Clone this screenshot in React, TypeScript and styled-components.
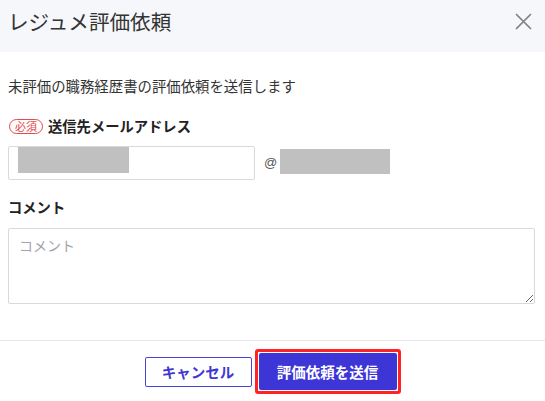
import React from "react"
import styled, { createGlobalStyle } from "styled-components"

const GlobalStyle = createGlobalStyle`
  html, body {
    margin: 0;
    padding: 0;
    background: #ffffff;
  }
  body {
    font-family: "Noto Sans CJK JP", "Noto Sans", sans-serif;
    color: #333333;
  }
  * {
    box-sizing: border-box;
  }
`

const CloseIcon = () => (
  <svg width="17" height="17" viewBox="0 0 17 17" fill="none">
    <path d="M1.5 1.5L15.5 15.5M15.5 1.5L1.5 15.5" stroke="#808080" strokeWidth="1.7" strokeLinecap="round" />
  </svg>
)

const App = () => (
  <>
    <GlobalStyle />
    <Dialog>
      <Header>
        <Title>レジュメ評価依頼</Title>
        <CloseButton aria-label="閉じる">
          <CloseIcon />
        </CloseButton>
      </Header>
      <Body>
        <Lead>未評価の職務経歴書の評価依頼を送信します</Lead>
        <LabelRow $top={20}>
          <Required>必須</Required>
          <Label>送信先メールアドレス</Label>
        </LabelRow>
        <EmailRow>
          <InputWrap>
            <TextInput type="text" />
            <Redacted $left={10} $width={111} />
          </InputWrap>
          <At>@</At>
          <DomainBlock />
        </EmailRow>
        <LabelRow $top={17}>
          <Label>コメント</Label>
        </LabelRow>
        <Comment placeholder="コメント" />
      </Body>
      <Footer>
        <CancelButton>キャンセル</CancelButton>
        <Highlight>
          <SubmitButton>評価依頼を送信</SubmitButton>
        </Highlight>
      </Footer>
    </Dialog>
  </>
)

const Dialog = styled.div`
  width: 545px;
  height: 401px;
  background: #ffffff;
  display: flex;
  flex-direction: column;
  overflow: hidden;
`

const Header = styled.div`
  height: 52px;
  flex-shrink: 0;
  background: #f6f7fb;
  display: flex;
  justify-content: space-between;
  align-items: flex-start;
  padding: 9px 13px 0 8px;
`

const Title = styled.h1`
  margin: 0;
  font-size: 20.6px;
  line-height: 24px;
  font-weight: 400;
  color: #333333;
`

const CloseButton = styled.button`
  border: none;
  background: none;
  padding: 0;
  margin-top: 4px;
  width: 17px;
  height: 17px;
  display: flex;
  cursor: pointer;
`

const Body = styled.div`
  padding: 24px 10px 36px 8px;
  border-bottom: 1px solid #e6e6ef;
  display: flex;
  flex-direction: column;
`

const Lead = styled.p`
  margin: 0;
  font-size: 14.4px;
  line-height: 20px;
  color: #333333;
`

const LabelRow = styled.div<{ $top: number }>`
  margin-top: ${(p) => p.$top}px;
  height: 20px;
  display: flex;
  align-items: center;
  gap: 5px;
`

const Required = styled.span`
  margin-left: 1px;
  width: 34px;
  height: 15px;
  border: 1px solid #e5484d;
  border-radius: 8px;
  color: #e5484d;
  font-size: 11px;
  line-height: 13px;
  display: flex;
  align-items: center;
  justify-content: center;
`

const Label = styled.span`
  font-size: 14.3px;
  line-height: 20px;
  font-weight: 700;
  color: #222222;
`

const EmailRow = styled.div`
  margin-top: 10px;
  display: flex;
  align-items: flex-start;
`

const InputWrap = styled.div`
  position: relative;
  width: 247px;
  height: 34px;
`

const TextInput = styled.input`
  width: 100%;
  height: 100%;
  border: 1px solid #d6d9df;
  border-radius: 2px;
  padding: 0 10px;
  font-size: 14px;
  font-family: inherit;
  outline: none;
`

const Redacted = styled.div<{ $left: number; $width: number }>`
  position: absolute;
  top: 1px;
  left: ${(p) => p.$left}px;
  width: ${(p) => p.$width}px;
  height: 26px;
  background: #c0c0c0;
`

const At = styled.span`
  margin: 8px 3px 0 9px;
  font-family: "Liberation Sans", Arial, sans-serif;
  font-size: 13px;
  line-height: 18px;
  color: #555555;
`

const DomainBlock = styled.div`
  margin-top: 3px;
  width: 110px;
  height: 25px;
  background: #c0c0c0;
`

const Comment = styled.textarea`
  margin-top: 11px;
  width: 100%;
  height: 76px;
  border: 1px solid #d6d9df;
  border-radius: 2px;
  padding: 6px 10px;
  font-family: inherit;
  font-size: 14px;
  line-height: 20px;
  color: #333333;
  outline: none;
  resize: vertical;

  &::placeholder {
    color: #a3a3ad;
  }
`

const Footer = styled.div`
  padding-top: 8px;
  display: flex;
  justify-content: center;
  align-items: center;
  gap: 3px;
`

const CancelButton = styled.button`
  width: 107px;
  height: 30px;
  border: 1px solid #4a43d8;
  border-radius: 2px;
  background: #ffffff;
  color: #3f37d4;
  font-family: inherit;
  font-size: 14.5px;
  font-weight: 700;
  cursor: pointer;
`

const Highlight = styled.div`
  border: 3px solid #ff2323;
  border-radius: 3px;
  padding: 1px;
  display: flex;
`

const SubmitButton = styled.button`
  width: 138px;
  height: 37px;
  border: none;
  border-radius: 2px;
  background: #3d35d5;
  color: #ffffff;
  font-family: inherit;
  font-size: 14.5px;
  font-weight: 700;
  cursor: pointer;
`

export default App
